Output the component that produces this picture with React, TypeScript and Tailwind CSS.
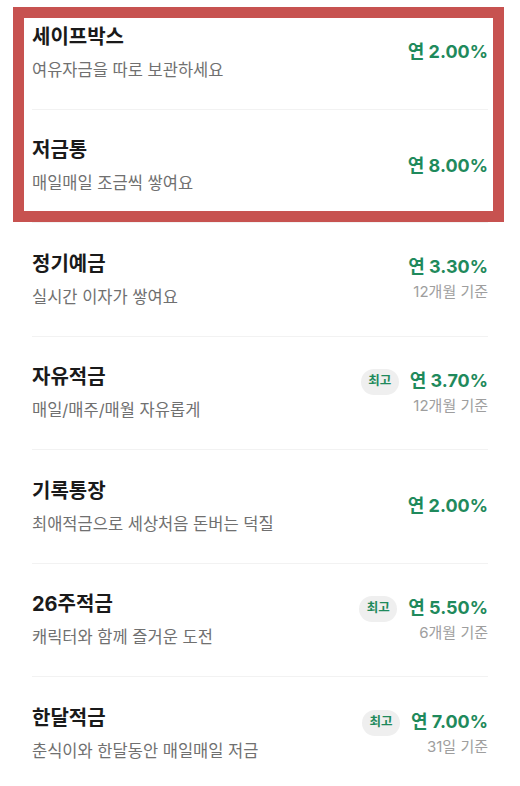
import React from "react";

type Item = {
  title: string;
  desc: string;
  rate: string;
  sub?: string;
  best?: boolean;
};

const items: Item[] = [
  { title: "세이프박스", desc: "여유자금을 따로 보관하세요", rate: "연 2.00%" },
  { title: "저금통", desc: "매일매일 조금씩 쌓여요", rate: "연 8.00%" },
  { title: "정기예금", desc: "실시간 이자가 쌓여요", rate: "연 3.30%", sub: "12개월 기준" },
  { title: "자유적금", desc: "매일/매주/매월 자유롭게", rate: "연 3.70%", sub: "12개월 기준", best: true },
  { title: "기록통장", desc: "최애적금으로 세상처음 돈버는 덕질", rate: "연 2.00%" },
  { title: "26주적금", desc: "캐릭터와 함께 즐거운 도전", rate: "연 5.50%", sub: "6개월 기준", best: true },
  { title: "한달적금", desc: "춘식이와 한달동안 매일매일 저금", rate: "연 7.00%", sub: "31일 기준", best: true },
];

export default function App() {
  return (
    <div
      className="relative w-[520px] h-[786px] overflow-hidden bg-white"
      style={{ fontFamily: 'Inter, "Noto Sans CJK KR", "Noto Sans", sans-serif' }}
    >
      <div className="mt-[-4px] px-[32px]">
        {items.map((it, i) => (
          <div
            key={i}
            className={`flex h-[113.5px] items-center justify-between ${
              i < items.length - 1 ? "border-b border-[#f2f2f2]" : ""
            }`}
          >
            <div className="flex flex-col gap-[9px]">
              <div className="text-[20px] leading-[26px] font-bold text-[#1a1a1a]">
                {it.title}
              </div>
              <div className="text-[16.5px] leading-[22px] text-[#707070]">
                {it.desc}
              </div>
            </div>
            <div className="flex items-start gap-[11px]">
              {it.best && (
                <div className="flex h-[26px] w-[38px] items-center justify-center rounded-full bg-[#efefef] text-[12.5px] font-bold text-[#1f8a5c]">
                  최고
                </div>
              )}
              <div className="flex flex-col items-end gap-[2px]">
                <div className="text-[18px] leading-[24px] font-bold text-[#1f8a5c]">
                  {it.rate}
                </div>
                {it.sub && (
                  <div className="text-[15px] leading-[22px] text-[#9e9e9e]">
                    {it.sub}
                  </div>
                )}
              </div>
            </div>
          </div>
        ))}
      </div>
      <div className="absolute left-[13px] top-[7px] h-[215px] w-[491px] border-[11px] border-[#c75250]" />
    </div>
  );
}
